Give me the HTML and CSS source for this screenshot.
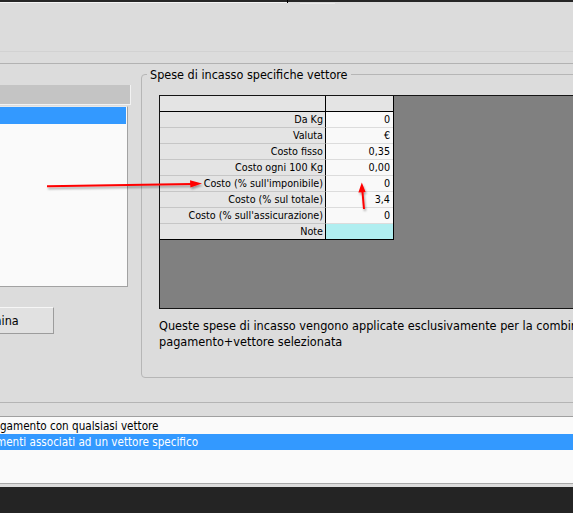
FILE: index.html
```html
<!DOCTYPE html>
<html lang="it">
<head>
<meta charset="utf-8">
<title>Spese di incasso specifiche vettore</title>
<link rel="stylesheet" href="styles.css">
</head>
<body>
<div class="window">
  <div class="topbar">
    <div class="top-field"></div>
    <div class="top-btn"></div>
  </div>
  <div class="toolbar"></div>
  <div class="subbar"></div>

  <div class="main">
    <div class="left">
      <div class="list-head"></div>
      <div class="list">
        <div class="list-row sel"></div>
      </div>
      <button class="btn" type="button">Elimina</button>
    </div>

    <div class="group">
      <div class="group-title"><span>Spese di incasso specifiche vettore</span></div>
      <div class="sheet">
        <div class="grid">
          <div class="cell lbl head"></div><div class="cell val head"></div>
          <div class="cell lbl">Da Kg</div><div class="cell val">0</div>
          <div class="cell lbl">Valuta</div><div class="cell val">€</div>
          <div class="cell lbl">Costo fisso</div><div class="cell val">0,35</div>
          <div class="cell lbl">Costo ogni 100 Kg</div><div class="cell val">0,00</div>
          <div class="cell lbl">Costo (% sull'imponibile)</div><div class="cell val">0</div>
          <div class="cell lbl">Costo (% sul totale)</div><div class="cell val">3,4</div>
          <div class="cell lbl">Costo (% sull'assicurazione)</div><div class="cell val">0</div>
          <div class="cell lbl last">Note</div><div class="cell val last note-cell"></div>
        </div>
      </div>
      <p class="note">Queste spese di incasso vengono applicate esclusivamente per la combinazione<br>pagamento+vettore selezionata</p>
    </div>
  </div>

  <div class="bottom">
    <div class="options">
      <div class="opt"><span class="pre"><span>Spese per pa</span></span><span>gamento con qualsiasi vettore</span></div>
      <div class="opt sel"><span class="pre"><span>Spese per paga</span></span><span class="cut">menti associati ad un vettore specifico</span></div>
    </div>
  </div>
  <div class="footer"></div>
</div>

<svg class="marks" width="573" height="513" viewBox="0 0 573 513" aria-hidden="true">
  <defs>
    <filter id="sh" x="-20%" y="-50%" width="140%" height="200%">
      <feDropShadow dx="1" dy="2" stdDeviation="1" flood-color="#000" flood-opacity="0.35"/>
    </filter>
  </defs>
  <g filter="url(#sh)">
    <path d="M47 186.2 L192 184" stroke="#f00" stroke-width="2" fill="none"/>
    <path d="M202 183.6 L190 180.2 L190.4 187.6 Z" fill="#f00"/>
    <path d="M364 209 L362.4 191" stroke="#f00" stroke-width="2" fill="none"/>
    <path d="M361.8 182.4 L358.4 192.6 L365.6 192 Z" fill="#f00"/>
  </g>
</svg>
</body>
</html>
```

FILE: styles.css
```css
html, body {
  margin: 0;
  padding: 0;
}
body {
  width: 573px;
  height: 513px;
  overflow: hidden;
  background: #dcdcdc;
  font-family: "DejaVu Sans Condensed", "DejaVu Sans", sans-serif;
  font-stretch: condensed;
  font-size: 12px;
  color: #000;
  position: relative;
}

.window {
  display: flex;
  flex-direction: column;
  height: 513px;
}

/* top strip */
.topbar {
  display: flex;
  height: 1px;
  border-top: 2px solid #262626;
}
.top-field {
  width: 287px;
  height: 1px;
  background: #f4f4f4;
  border-right: 1px solid #000;
  margin-top: -2px;
  padding-top: 2px;
  background-clip: content-box;
}
.top-btn {
  width: 35px;
  height: 1px;
  margin-left: 12px;
  margin-top: 1px;
  background: #eaeaea;
}

.toolbar {
  height: 48px;
  border-bottom: 1px solid #d2d2d2;
}
.subbar {
  height: 11px;
  border-bottom: 1px solid #b2b2b2;
}

/* main area */
.main {
  display: flex;
  height: 338px;
  border-bottom: 1px solid #b4b4b4;
}
.left {
  flex: 0 0 131px;
  padding-top: 21px;
  display: flex;
  flex-direction: column;
  align-items: flex-start;
}
.list-head {
  width: 130px;
  height: 19px;
  background: #c4c4c4;
  border-right: 1px solid #f2f2f2;
  border-bottom: 1px solid #f2f2f2;
}
.list {
  width: 127px;
  height: 179px;
  margin-top: 1px;
  background: #fafafa;
  border: 1px solid #a2a2a2;
  border-top-color: #e8e8e8;
  border-left: none;
}
.list-row {
  height: 17px;
  margin-right: 1px;
}
.list-row.sel {
  background: #3399ff;
}
.btn {
  margin-top: 20px;
  margin-left: -58px;
  width: 112px;
  height: 27px;
  background: #e1e1e1;
  border: 1px solid;
  border-color: #f6f6f6 #9c9c9c #9c9c9c #f6f6f6;
  font-family: inherit;
  font-stretch: condensed;
  font-size: 12.5px;
  color: #000;
  padding: 0;
}

/* group box */
.group {
  flex: 0 0 auto;
  width: 520px;
  height: 302px;
  margin-left: 10px;
  margin-top: 10px;
  border: 1px solid #b6b6b6;
  border-radius: 4px;
  padding-left: 17px;
}
.group-title {
  height: 28px;
  margin-top: -8px;
  margin-left: -12px;
  line-height: 15px;
  font-size: 12.5px;
}
.group-title span {
  background: #dcdcdc;
  padding: 0 3px;
}

.sheet {
  height: 212px;
  background: #808080;
  border: 1px solid #151515;
}
.grid {
  display: grid;
  grid-template-columns: 166px 67px;
  width: max-content;
  border-right: 1px solid #000;
  border-bottom: 1px solid #000;
  font-size: 10.7px;
}
.cell {
  height: 15px;
  line-height: 15px;
  border-bottom: 1px solid #c6c6c6;
  text-align: right;
  white-space: nowrap;
  overflow: hidden;
}
.lbl {
  background: #e4e4e4;
  border-right: 1px solid #000;
  padding-right: 2px;
}
.val {
  background: #f9f9f9;
  border-bottom-color: #dcdcdc;
  padding-right: 3px;
}
.cell.head {
  background: #e4e4e4;
  border-bottom-color: #000;
}
.cell.last {
  border-bottom: none;
}
.note-cell {
  background: #b0eef0;
}

.note {
  margin: 9px 0 0;
  line-height: 16px;
  font-size: 12.6px;
  white-space: nowrap;
}

/* bottom options list */
.bottom {
  padding-top: 13px;
  padding-bottom: 3px;
}
.options {
  height: 65px;
  padding-top: 1px;
  background: #fafafa;
  border-top: 1px solid #a0a0a0;
  border-bottom: 1px solid #a8a8a8;
  font-size: 11.6px;
}
.opt {
  display: flex;
  height: 16px;
  line-height: 16px;
  white-space: nowrap;
}
.opt.sel {
  background: #3399ff;
  color: #fff;
}
.pre {
  display: flex;
  justify-content: flex-end;
  width: 0;
}
.pre span {
  flex-shrink: 0;
}
.cut {
  margin-left: -4px;
}

.footer {
  flex: 1;
  background: #242424;
}

.marks {
  position: absolute;
  left: 0;
  top: 0;
  pointer-events: none;
}
```
